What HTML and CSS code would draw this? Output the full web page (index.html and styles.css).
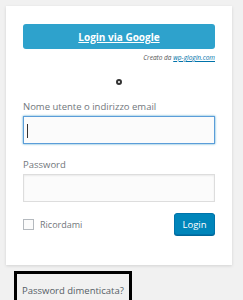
FILE: index.html
```html
<!DOCTYPE html>
<html lang="it">
<head>
    <meta charset="UTF-8">
    <meta name="viewport" content="width=device-width, initial-scale=1.0">
    <title>Login</title>
    <link rel="stylesheet" href="styles.css">
</head>
<body>
    <div class="login-card">
        <a class="google-button" href="#">Login via Google</a>
        <p class="credit">Creato da <a href="#">wp-glogin.com</a></p>
        <div class="spinner-row"><span class="spinner"></span></div>

        <label class="field-label" for="user">Nome utente o indirizzo email</label>
        <div class="input-wrap">
            <input class="text-input focused" type="text" id="user">
            <span class="caret"></span>
        </div>

        <label class="field-label second" for="pass">Password</label>
        <input class="text-input" type="password" id="pass">

        <div class="submit-row">
            <label class="remember"><span class="checkbox"></span>Ricordami</label>
            <button class="login-button">Login</button>
        </div>
    </div>

    <div class="lost-box">
        <a href="#">Password dimenticata?</a>
    </div>
</body>
</html>
```

FILE: styles.css
```css
body {
    margin: 0;
    background-color: #f1f1f1;
    font-family: "Open Sans", "Noto Sans", sans-serif;
    color: #444;
}
.login-card {
    margin: 6px 0 0 6px;
    width: 192px;
    height: 241px;
    padding: 18px 17px 0 17px;
    background-color: white;
    box-shadow: 0 1px 3px rgba(0,0,0,0.13);
}
.google-button {
    display: flex;
    align-items: center;
    justify-content: center;
    height: 25px;
    background-color: #2ea2cc;
    border-radius: 3px;
    color: white;
    font-weight: bold;
    font-size: 10px;
    text-decoration: underline;
}
.credit {
    margin: 4px 0 0 0;
    text-align: right;
    font-size: 6.5px;
    font-style: italic;
    color: #555;
}
.credit a {
    color: #0073aa;
}
.spinner-row {
    display: flex;
    justify-content: center;
    margin-top: 17px;
}
.spinner {
    width: 2px;
    height: 2px;
    border: 2px solid #333;
    border-radius: 50%;
}
.field-label {
    display: block;
    margin-top: 15px;
    font-size: 9.5px;
    color: #72777c;
}
.field-label.second {
    margin-top: 14px;
}
.input-wrap {
    position: relative;
}
.caret {
    position: absolute;
    left: 4px;
    top: 8px;
    width: 1px;
    height: 14px;
    background-color: #333;
}
.text-input {
    display: block;
    box-sizing: border-box;
    width: 192px;
    height: 28px;
    margin-top: 3px;
    border: 1px solid #ddd;
    background-color: #fbfbfb;
    box-shadow: inset 0 1px 2px rgba(0,0,0,0.07);
}
.text-input.focused {
    border-color: #5b9dd9;
    box-shadow: 0 0 2px rgba(30,140,190,0.8);
}
.submit-row {
    display: flex;
    justify-content: space-between;
    align-items: center;
    margin-top: 11px;
}
.remember {
    display: flex;
    align-items: center;
    gap: 6px;
    font-size: 9px;
    color: #72777c;
}
.checkbox {
    width: 9px;
    height: 9px;
    border: 1px solid #b4b9be;
    background-color: #fbfbfb;
}
.login-button {
    width: 41px;
    height: 22px;
    padding: 0;
    background-color: #0085ba;
    border: 1px solid #0073aa;
    border-radius: 3px;
    box-shadow: 0 1px 0 #006799;
    color: white;
    font-family: inherit;
    font-size: 9.5px;
}
.lost-box {
    box-sizing: border-box;
    width: 118px;
    height: 34px;
    margin: 6px 0 0 14px;
    padding: 3px 0 0 5px;
    border: 3px solid black;
    white-space: nowrap;
}
.lost-box a {
    font-size: 9.5px;
    color: #555d66;
    text-decoration: none;
}
```
